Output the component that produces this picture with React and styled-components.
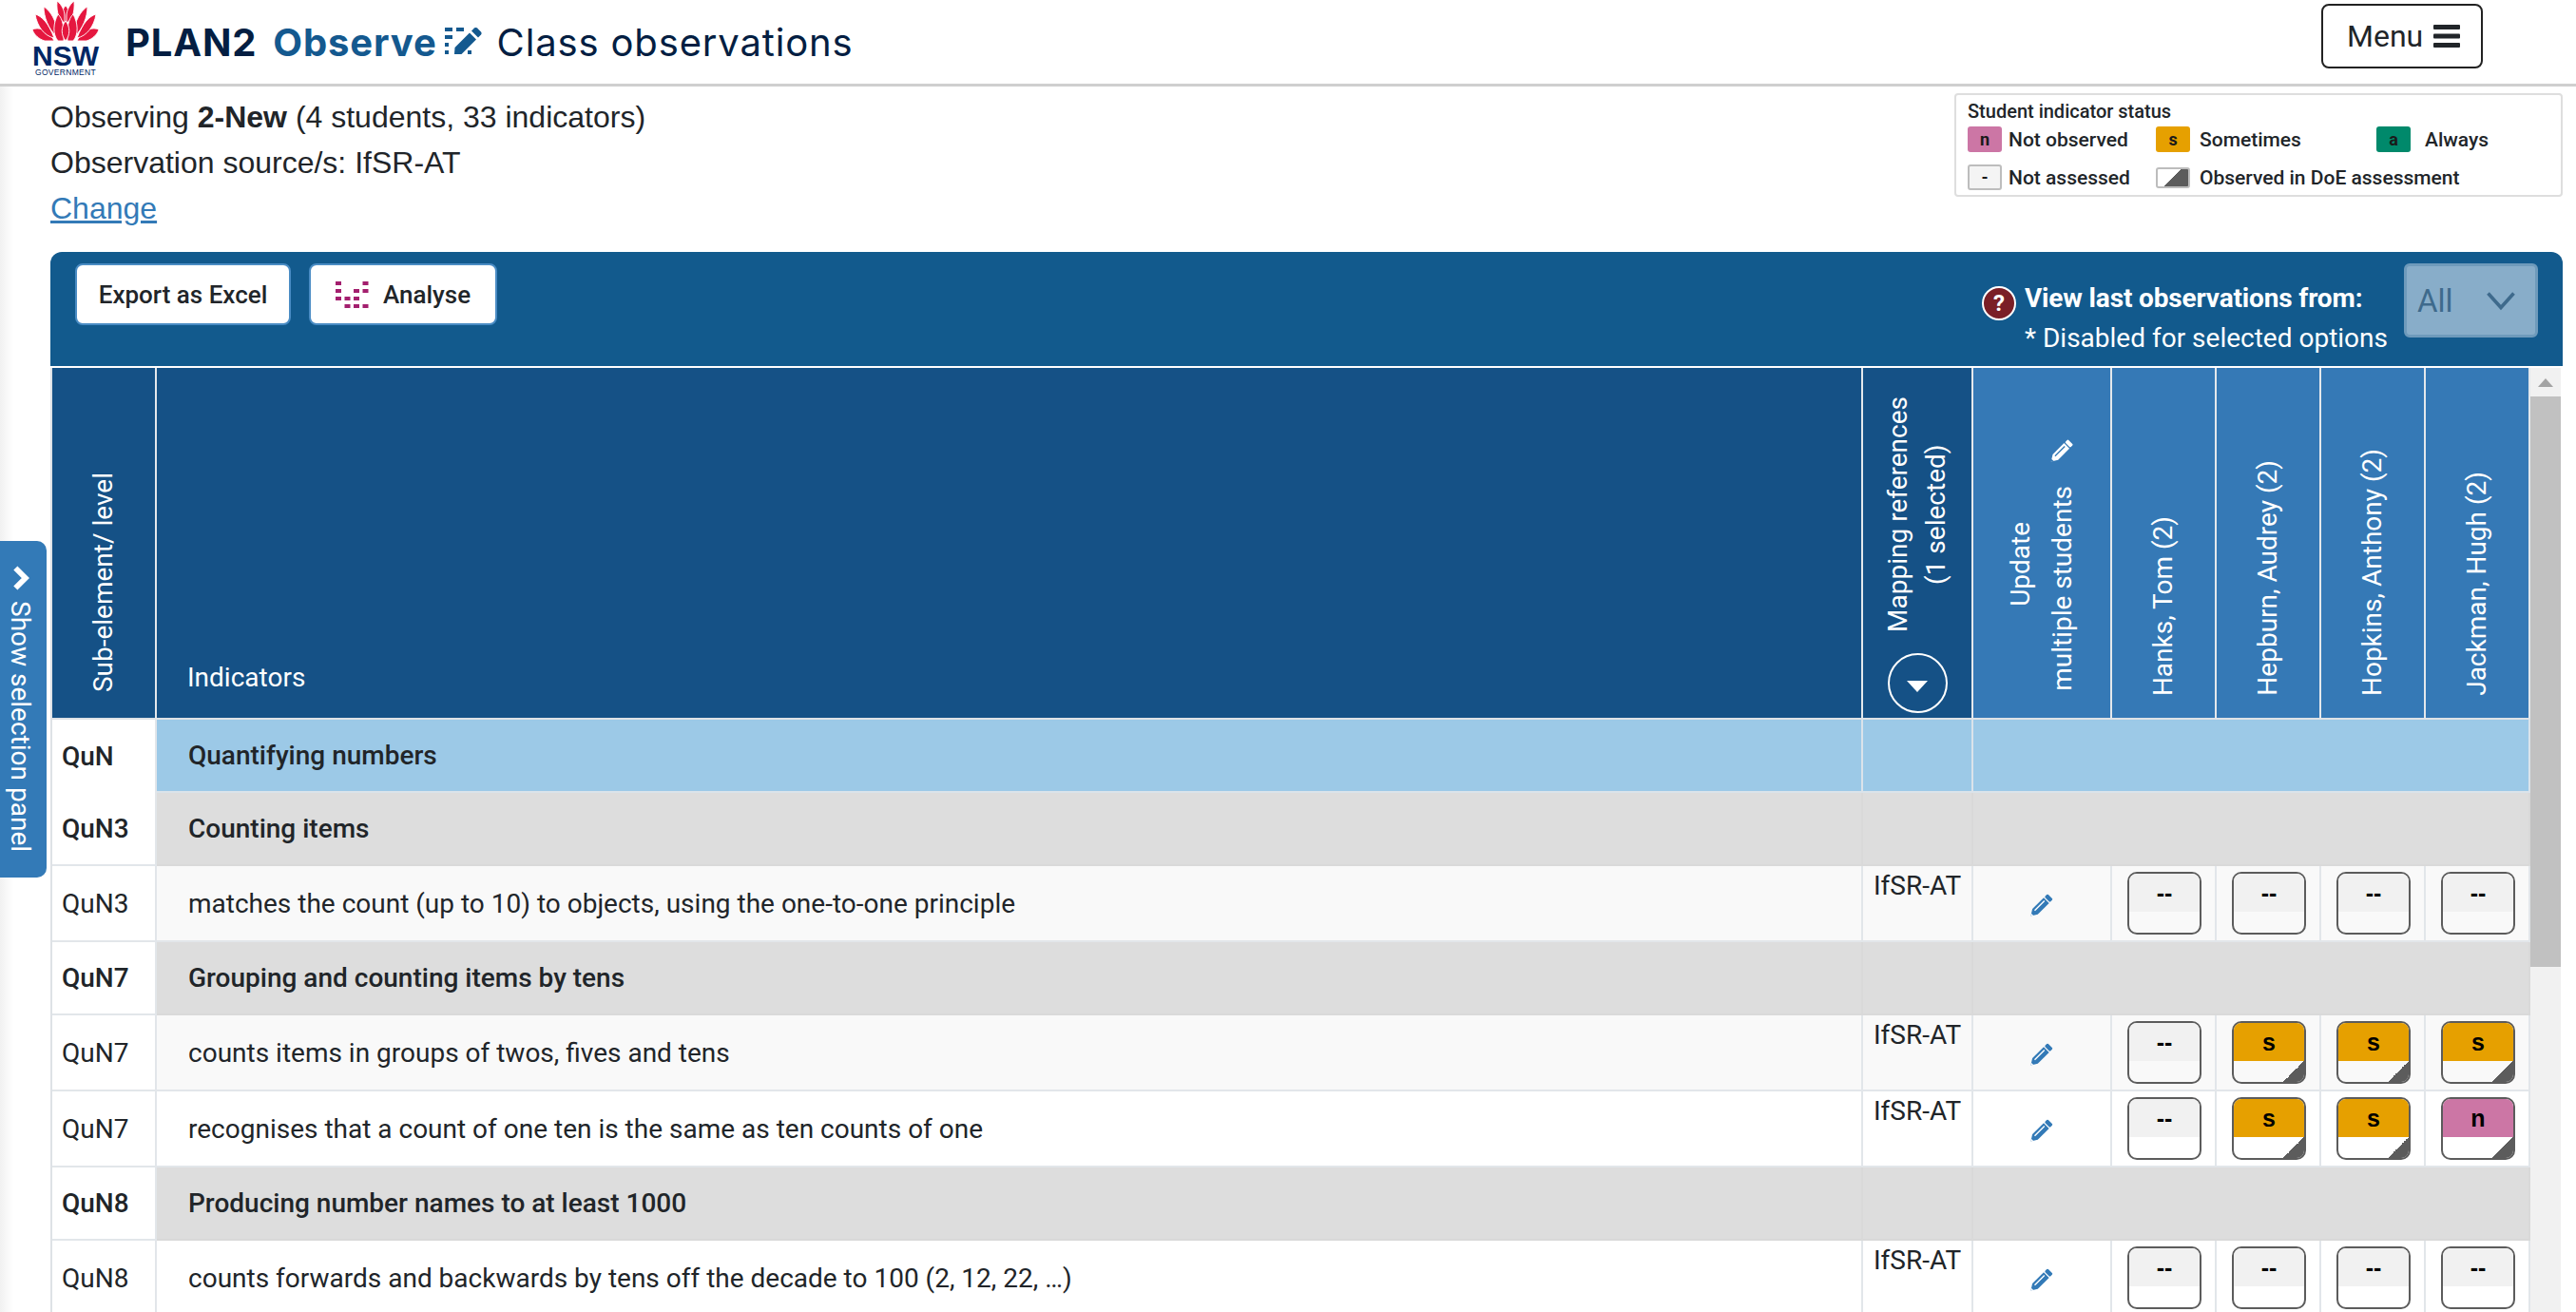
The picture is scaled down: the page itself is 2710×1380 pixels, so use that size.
import React from 'react';
import styled, { createGlobalStyle } from 'styled-components';

const rows = [
  { type: 'domain', code: 'QuN', title: 'Quantifying numbers' },
  { type: 'group', code: 'QuN3', title: 'Counting items' },
  { type: 'item', code: 'QuN3', title: 'matches the count (up to 10) to objects, using the one-to-one principle', shade: true, marks: ['-', '-', '-', '-'] },
  { type: 'group', code: 'QuN7', title: 'Grouping and counting items by tens' },
  { type: 'item', code: 'QuN7', title: 'counts items in groups of twos, fives and tens', shade: true, marks: ['-', 's', 's', 's'] },
  { type: 'item', code: 'QuN7', title: 'recognises that a count of one ten is the same as ten counts of one', marks: ['-', 's', 's', 'n'] },
  { type: 'group', code: 'QuN8', title: 'Producing number names to at least 1000' },
  { type: 'item', code: 'QuN8', title: 'counts forwards and backwards by tens off the decade to 100 (2, 12, 22, …)', marks: ['-', '-', '-', '-'] },
];

const students = ['Hanks, Tom (2)', 'Hepburn, Audrey (2)', 'Hopkins, Anthony (2)', 'Jackman, Hugh (2)'];

const analyseDots = [[0, 0], [3, 0], [0, 1], [2, 1], [3, 1], [0, 2], [1, 2], [2, 2], [1, 3], [2, 3], [3, 3]];

const markColours = { '-': '#f1f1f1', s: '#e6a000', n: '#cc76a5', a: '#00896b' };

const petals = [
  'M1 31 C8 28 18 31 24 43 L14 43 C8 41 3 37 1 31Z',
  'M4 15 C11 17 18 24 24 40 C14 38 6 28 4 15Z',
  'M13 7 C18 10 24 17 27 30 L26 38 C18 30 13 18 13 7Z',
  'M27 1 C32 5 35 11 35 17 L35 24 C30 21 26 15 27 1Z',
  'M28 15 C33 19 35 30 34 43 L28 43 C22 36 23 24 28 15Z',
];

const GlobalStyle = createGlobalStyle`
  html, body {
    margin: 0;
    height: 100%;
    overflow: hidden;
    background: #fff;
  }
  * {
    box-sizing: border-box;
  }
  body {
    font-family: Roboto, "Liberation Sans", sans-serif;
    color: #212529;
  }
`;

const Header = styled.header`
  display: flex;
  align-items: flex-start;
  justify-content: space-between;
  height: 91px;
  border-bottom: 3px solid #cfcfcf;
  padding: 0 98px 0 33px;
`;

const Brand = styled.div`
  display: flex;
  align-items: flex-start;
`;

const Logo = styled.div`
  display: flex;
  flex-direction: column;
  align-items: center;
  width: 72px;
  margin-right: 27px;
  color: #002664;
  font-family: "Liberation Sans", sans-serif;
`;

const LogoWord = styled.span`
  font-size: 30px;
  font-weight: 700;
  line-height: 25px;
  margin-top: 3px;
`;

const LogoSub = styled.span`
  font-size: 8.5px;
  line-height: 10px;
  letter-spacing: 0.3px;
`;

const Title = styled.h1`
  display: flex;
  align-items: center;
  height: 88px;
  margin: 0;
  font-family: Inter, "Noto Sans", sans-serif;
  font-size: 40px;
  font-weight: 400;
  letter-spacing: 0.85px;
  color: #041e42;
`;

const TitleStrong = styled.span`
  font-weight: 700;
  color: ${(p) => p.$colour};
  margin-right: ${(p) => p.$gap}px;
`;

const TitleRest = styled.span`
  margin-left: 15px;
`;

const MenuButton = styled.button`
  display: flex;
  align-items: center;
  gap: 11px;
  width: 170px;
  height: 68px;
  margin-top: 4px;
  padding: 0 0 0 25px;
  background: #fff;
  border: 2px solid #222;
  border-radius: 8px;
  font-family: Roboto, sans-serif;
  font-size: 32px;
  color: #212529;
`;

const Main = styled.main`
  position: relative;
  padding: 0 14px 0 53px;
  height: 1289px;
  overflow: hidden;
  background: linear-gradient(90deg, #f1f1f1, #fff 14px);
`;

const Summary = styled.section`
  display: flex;
  justify-content: space-between;
  align-items: flex-start;
  height: 174px;
`;

const SummaryText = styled.div`
  padding-top: 8px;
  font-family: "Liberation Sans", sans-serif;
  font-size: 32px;
  line-height: 48px;
`;

const ChangeLink = styled.a`
  color: #337ab7;
  text-decoration: underline;
`;

const Legend = styled.aside`
  width: 640px;
  height: 109px;
  margin-top: 7px;
  padding: 2px 12px;
  border: 2px solid #dedede;
  border-radius: 4px;
  font-size: 21px;
`;

const LegendTitle = styled.div`
  font-size: 20px;
  font-weight: 500;
  line-height: 31px;
`;

const LegendGrid = styled.div`
  display: grid;
  grid-template-columns: 198px 232px 1fr;
  row-gap: 13px;
  font-weight: 500;
`;

const LegendItem = styled.div`
  display: flex;
  align-items: center;
  gap: ${(p) => p.$gap || 7}px;
  height: 27px;
  grid-column: span ${(p) => p.$span || 1};
`;

const LegendChip = styled.span`
  display: flex;
  align-items: center;
  justify-content: center;
  width: 36px;
  height: 27px;
  background: ${(p) => p.$colour};
  border: ${(p) => (p.$outlined ? '2px solid #bdbdbd' : 'none')};
  border-radius: 3px;
  font-size: 18px;
  font-weight: 700;
  color: #1a1a1a;
`;

const LegendCorner = styled(LegendChip)`
  background: linear-gradient(135deg, #fff 50%, #5c5c5c 50%);
  height: 22px;
`;

const Toolbar = styled.div`
  display: flex;
  justify-content: space-between;
  height: 120px;
  padding: 12px 26px 0 26px;
  background: #125a8d;
  border-radius: 12px 12px 0 0;
`;

const ToolbarGroup = styled.div`
  display: flex;
  align-items: flex-start;
  gap: ${(p) => p.$gap}px;
`;

const ToolButton = styled.button`
  display: flex;
  align-items: center;
  justify-content: center;
  gap: 15px;
  width: ${(p) => p.$width}px;
  height: 65px;
  background: #fff;
  border: 2px solid #4a8cc4;
  border-radius: 8px;
  font-family: Roboto, sans-serif;
  font-size: 26px;
  font-weight: 500;
  color: #212529;
`;

const HelpBadge = styled.span`
  display: flex;
  align-items: center;
  justify-content: center;
  width: 36px;
  height: 36px;
  margin-top: 24px;
  border: 2px solid #fff;
  border-radius: 50%;
  background: #7a1f27;
  color: #fff;
  font-size: 24px;
  font-weight: 700;
`;

const ViewText = styled.div`
  padding-top: 16px;
  margin-right: 8px;
  color: #fff;
  font-size: 28px;
  line-height: 42px;
`;

const ViewTitle = styled.div`
  font-weight: 700;
  letter-spacing: -0.15px;
`;

const DisabledSelect = styled.div`
  display: flex;
  align-items: center;
  justify-content: space-between;
  width: 141px;
  height: 78px;
  padding: 0 18px 0 11px;
  background: #88adc9;
  border: 3px solid #6e9abb;
  border-radius: 6px;
  color: #3e6a8c;
  font-size: 33px;
`;

const TableArea = styled.div`
  display: flex;
  padding-top: 2px;
`;

const Table = styled.table`
  flex: none;
  width: 2609px;
  table-layout: fixed;
  border-collapse: separate;
  border-spacing: 0;
  border-left: 2px solid #dee2e6;
  font-size: 28px;
`;

const HeadCell = styled.th`
  height: 370px;
  padding: 0;
  background: ${(p) => (p.$light ? '#3579b6' : '#155186')};
  border-right: 2px solid #e4e8ec;
  border-bottom: 2px solid #dee2e6;
  color: #fff;
  font-weight: 400;
  vertical-align: bottom;
`;

const HeadStack = styled.div`
  display: flex;
  flex-direction: column;
  align-items: center;
  justify-content: flex-end;
  gap: ${(p) => p.$gap || 0}px;
  padding-bottom: ${(p) => p.$bottom}px;
`;

const VerticalText = styled.div`
  writing-mode: vertical-rl;
  transform: rotate(180deg);
  white-space: nowrap;
  line-height: ${(p) => p.$line || 40}px;
`;

const HeadPencil = styled.span`
  display: inline-block;
  margin-inline-start: 22px;
  transform: rotate(180deg) translateX(6px);
  vertical-align: middle;
  line-height: 0;
`;

const IndicatorsHead = styled.div`
  padding: 0 0 26px 32px;
  text-align: left;
`;

const DropCircle = styled.span`
  display: flex;
  align-items: center;
  justify-content: center;
  width: 63px;
  height: 63px;
  border: 2px solid #fff;
  border-radius: 50%;
`;

const DropArrow = styled.span`
  width: 0;
  height: 0;
  margin-top: 6px;
  border-left: 11px solid transparent;
  border-right: 11px solid transparent;
  border-top: 12px solid #fff;
`;

const Cell = styled.td`
  height: ${(p) => (p.$tall ? 80 : 77)}px;
  padding: 0;
  background: ${(p) => p.$bg};
  border-right: 2px solid ${(p) => p.$line || '#e2e6ea'};
  border-bottom: ${(p) => (p.$open ? 0 : `2px solid ${p.$line || '#e2e6ea'}`)};
`;

const CodeCell = styled(Cell)`
  padding-left: 10px;
  font-weight: ${(p) => (p.$strong ? 500 : 400)};
`;

const TitleCell = styled(Cell)`
  padding-left: 33px;
  font-weight: ${(p) => (p.$strong ? 500 : 400)};
`;

const SourceCell = styled(Cell)`
  padding: 0 0 0 11px;
  vertical-align: top;
  line-height: 42px;
`;

const CentreCell = styled(Cell)`
  padding-left: 2px;
  text-align: center;
`;

const PencilCell = styled(Cell)`
  padding-top: 3px;
  text-align: center;
  line-height: 0;
`;

const StatusButton = styled.div`
  position: relative;
  display: flex;
  flex-direction: column;
  width: 78px;
  height: 66px;
  margin: 0 auto;
  border: 2px solid #5c5c5c;
  border-radius: 10px;
  overflow: hidden;
  ${(p) => p.$observed && `
    &::after {
      content: '';
      position: absolute;
      right: 0;
      bottom: 0;
      width: 22px;
      height: 22px;
      background: linear-gradient(135deg, transparent 50%, #5c5c5c 50%);
    }
  `}
`;

const StatusFace = styled.div`
  display: flex;
  align-items: center;
  justify-content: center;
  height: 40px;
  padding-top: 1px;
  background: ${(p) => p.$colour};
  color: #000;
  font-family: "Liberation Sans", sans-serif;
  font-size: 25px;
  font-weight: 700;
  line-height: 1;
`;

const Scrollbar = styled.div`
  flex: none;
  width: 32px;
  height: 995px;
  background: #f1f1f1;
  display: flex;
  flex-direction: column;
  align-items: center;
`;

const ScrollUp = styled.span`
  width: 0;
  height: 0;
  margin: 11px 0 10px;
  border-left: 8px solid transparent;
  border-right: 8px solid transparent;
  border-bottom: 9px solid #a3a3a3;
`;

const ScrollThumb = styled.div`
  width: 100%;
  height: 600px;
  background: #c1c1c1;
`;

const SideTab = styled.button`
  position: absolute;
  left: 0;
  top: 478px;
  display: flex;
  flex-direction: column;
  align-items: center;
  gap: 10px;
  width: 49px;
  height: 354px;
  padding: 25px 8px 0 0;
  background: #337ab7;
  border: 0;
  border-radius: 0 10px 10px 0;
  color: #fff;
  font-family: Roboto, sans-serif;
  font-size: 28px;
`;

const SideLabel = styled.span`
  writing-mode: vertical-rl;
  white-space: nowrap;
  line-height: 30px;
`;

const Waratah = () => (
  <svg width="72" height="43" viewBox="0 0 72 43" aria-hidden="true">
    <g fill="#e5173f" stroke="#fff" strokeWidth="0.9">
      <path d="M36 6 C40 10 41 16 36 24 C31 16 32 10 36 6Z" />
      {petals.map((d) => (
        <React.Fragment key={d}>
          <path d={d} />
          <path d={d} transform="matrix(-1 0 0 1 72 0)" />
        </React.Fragment>
      ))}
      <path d="M36 22 C41 28 41 37 36 43 C31 37 31 28 36 22Z" />
    </g>
  </svg>
);

const ObserveIcon = () => (
  <svg width="40" height="30" viewBox="0 0 40 30" fill="#14598f" aria-hidden="true">
    <rect x="0" y="0" width="8" height="4" />
    <rect x="12" y="0" width="8" height="4" />
    <rect x="0" y="8" width="8" height="4" />
    <rect x="0" y="16" width="4" height="4" />
    <rect x="0" y="24" width="4" height="4" />
    <rect x="24" y="24" width="4" height="4" />
    <path d="M10 28 L10.5 21 L26 5.5 L33 12.5 L17.5 28Z" />
    <path d="M28 3.5 L31 0.5 C32 -0.3 33 -0.3 34 0.5 L38 4.5 C38.8 5.5 38.8 6.5 38 7.5 L35 10.5Z" />
  </svg>
);

const AnalyseIcon = () => (
  <svg width="35" height="28" viewBox="0 0 35 28" fill="#a31f6e" aria-hidden="true">
    {analyseDots.map(([col, row]) => (
      <rect key={`${col}-${row}`} x={col * 9.5} y={row * 8} width="6" height="4" />
    ))}
  </svg>
);

const Pencil = ({ colour, cut }) => (
  <svg width="30" height="30" viewBox="-0.9 -5 30 30" aria-hidden="true">
    <g transform="rotate(45 12 12)" fill={colour}>
      <rect x="8" y="-3.5" width="8" height="4.5" rx="1.2" />
      <path d="M8 2.2 H16 V19 L12 25.5 L8 19Z" />
      <rect x="10.2" y="4" width="1.4" height="14.5" fill={cut} />
      <path d="M10.4 23.2 L12 25.5 L13.6 23.2Z" fill={cut} />
    </g>
  </svg>
);

const Chevron = ({ colour, size, stroke, points }) => (
  <svg width={size} height={size} viewBox="0 0 24 24" fill="none" stroke={colour} strokeWidth={stroke} aria-hidden="true">
    <polyline points={points} />
  </svg>
);

const Hamburger = () => (
  <svg width="28" height="24" viewBox="0 0 28 24" fill="#212529" aria-hidden="true">
    <rect width="28" height="5" rx="1" />
    <rect y="9.5" width="28" height="5" rx="1" />
    <rect y="19" width="28" height="5" rx="1" />
  </svg>
);

const StudentMark = ({ mark }) => (
  <StatusButton $observed={mark !== '-'}>
    <StatusFace $colour={markColours[mark]}>{mark === '-' ? '--' : mark}</StatusFace>
  </StatusButton>
);

const TableRow = ({ row, next }) => {
  if (row.type === 'item') {
    const bg = row.shade ? '#f9f9f9' : '#fff';
    return (
      <tr>
        <CodeCell $tall $bg="#fff">{row.code}</CodeCell>
        <TitleCell $tall $bg={bg}>{row.title}</TitleCell>
        <SourceCell $tall $bg={bg}>IfSR-AT</SourceCell>
        <PencilCell $tall $bg={bg}><Pencil colour="#337ab7" cut="#fff" /></PencilCell>
        {row.marks.map((mark, i) => (
          <CentreCell $tall $bg={bg} key={i}><StudentMark mark={mark} /></CentreCell>
        ))}
      </tr>
    );
  }
  const isDomain = row.type === 'domain';
  const bg = isDomain ? '#9cc9e7' : '#dddddd';
  const line = isDomain ? '#dbe3ea' : '#d9d9d9';
  return (
    <tr>
      <CodeCell $bg="#fff" $strong $open={next && next.type === 'group'} $line="#e2e6ea">{row.code}</CodeCell>
      <TitleCell $bg={bg} $strong $line={line}>{row.title}</TitleCell>
      <Cell $bg={bg} $line={line} />
      <Cell $bg={bg} $line={line} colSpan={5} />
    </tr>
  );
};

const App = () => (
  <>
    <GlobalStyle />
    <Header>
      <Brand>
        <Logo>
          <Waratah />
          <LogoWord>NSW</LogoWord>
          <LogoSub>GOVERNMENT</LogoSub>
        </Logo>
        <Title>
          <TitleStrong $colour="#041e42" $gap={17}>PLAN2</TitleStrong>
          <TitleStrong $colour="#14598f" $gap={8}>Observe</TitleStrong>
          <ObserveIcon />
          <TitleRest>Class observations</TitleRest>
        </Title>
      </Brand>
      <MenuButton>Menu <Hamburger /></MenuButton>
    </Header>

    <Main>
      <SideTab>
        <Chevron colour="#fff" size={28} stroke={5} points="8,3 17,12 8,21" />
        <SideLabel>Show selection panel</SideLabel>
      </SideTab>

      <Summary>
        <SummaryText>
          <div>Observing <b>2-New</b> (4 students, 33 indicators)</div>
          <div>Observation source/s: IfSR-AT</div>
          <ChangeLink href="#change">Change</ChangeLink>
        </SummaryText>
        <Legend>
          <LegendTitle>Student indicator status</LegendTitle>
          <LegendGrid>
            <LegendItem><LegendChip $colour={markColours.n}>n</LegendChip>Not observed</LegendItem>
            <LegendItem $gap={10}><LegendChip $colour={markColours.s}>s</LegendChip>Sometimes</LegendItem>
            <LegendItem $gap={15}><LegendChip $colour={markColours.a}>a</LegendChip>Always</LegendItem>
            <LegendItem><LegendChip $colour="#f4f4f4" $outlined>-</LegendChip>Not assessed</LegendItem>
            <LegendItem $gap={10} $span={2}><LegendCorner $outlined />Observed in DoE assessment</LegendItem>
          </LegendGrid>
        </Legend>
      </Summary>

      <Toolbar>
        <ToolbarGroup $gap={19}>
          <ToolButton $width={227}>Export as Excel</ToolButton>
          <ToolButton $width={198}><AnalyseIcon />Analyse</ToolButton>
        </ToolbarGroup>
        <ToolbarGroup $gap={9}>
          <HelpBadge>?</HelpBadge>
          <ViewText>
            <ViewTitle>View last observations from:</ViewTitle>
            <div>* Disabled for selected options</div>
          </ViewText>
          <DisabledSelect>
            All
            <Chevron colour="#3e6a8c" size={36} stroke={2.4} points="3,7 12,17 21,7" />
          </DisabledSelect>
        </ToolbarGroup>
      </Toolbar>

      <TableArea>
        <Table>
          <colgroup>
            <col style={{ width: 110 }} />
            <col style={{ width: 1795 }} />
            <col style={{ width: 116 }} />
            <col style={{ width: 146 }} />
            <col style={{ width: 110 }} />
            <col style={{ width: 110 }} />
            <col style={{ width: 110 }} />
            <col style={{ width: 110 }} />
          </colgroup>
          <thead>
            <tr>
              <HeadCell>
                <HeadStack $bottom={27}><VerticalText>Sub-element/ level</VerticalText></HeadStack>
              </HeadCell>
              <HeadCell><IndicatorsHead>Indicators</IndicatorsHead></HeadCell>
              <HeadCell>
                <HeadStack $bottom={5} $gap={22}>
                  <VerticalText>Mapping references<br />(1 selected)</VerticalText>
                  <DropCircle><DropArrow /></DropCircle>
                </HeadStack>
              </HeadCell>
              <HeadCell $light>
                <HeadStack $bottom={28}>
                  <VerticalText $line={44}>
                    Update<br />multiple students
                    <HeadPencil><Pencil colour="#fff" cut="#3579b6" /></HeadPencil>
                  </VerticalText>
                </HeadStack>
              </HeadCell>
              {students.map((name) => (
                <HeadCell $light key={name}>
                  <HeadStack $bottom={23}><VerticalText>{name}</VerticalText></HeadStack>
                </HeadCell>
              ))}
            </tr>
          </thead>
          <tbody>
            {rows.map((row, i) => (
              <TableRow row={row} next={rows[i + 1]} key={i} />
            ))}
          </tbody>
        </Table>
        <Scrollbar>
          <ScrollUp />
          <ScrollThumb />
        </Scrollbar>
      </TableArea>
    </Main>
  </>
);

export default App;
